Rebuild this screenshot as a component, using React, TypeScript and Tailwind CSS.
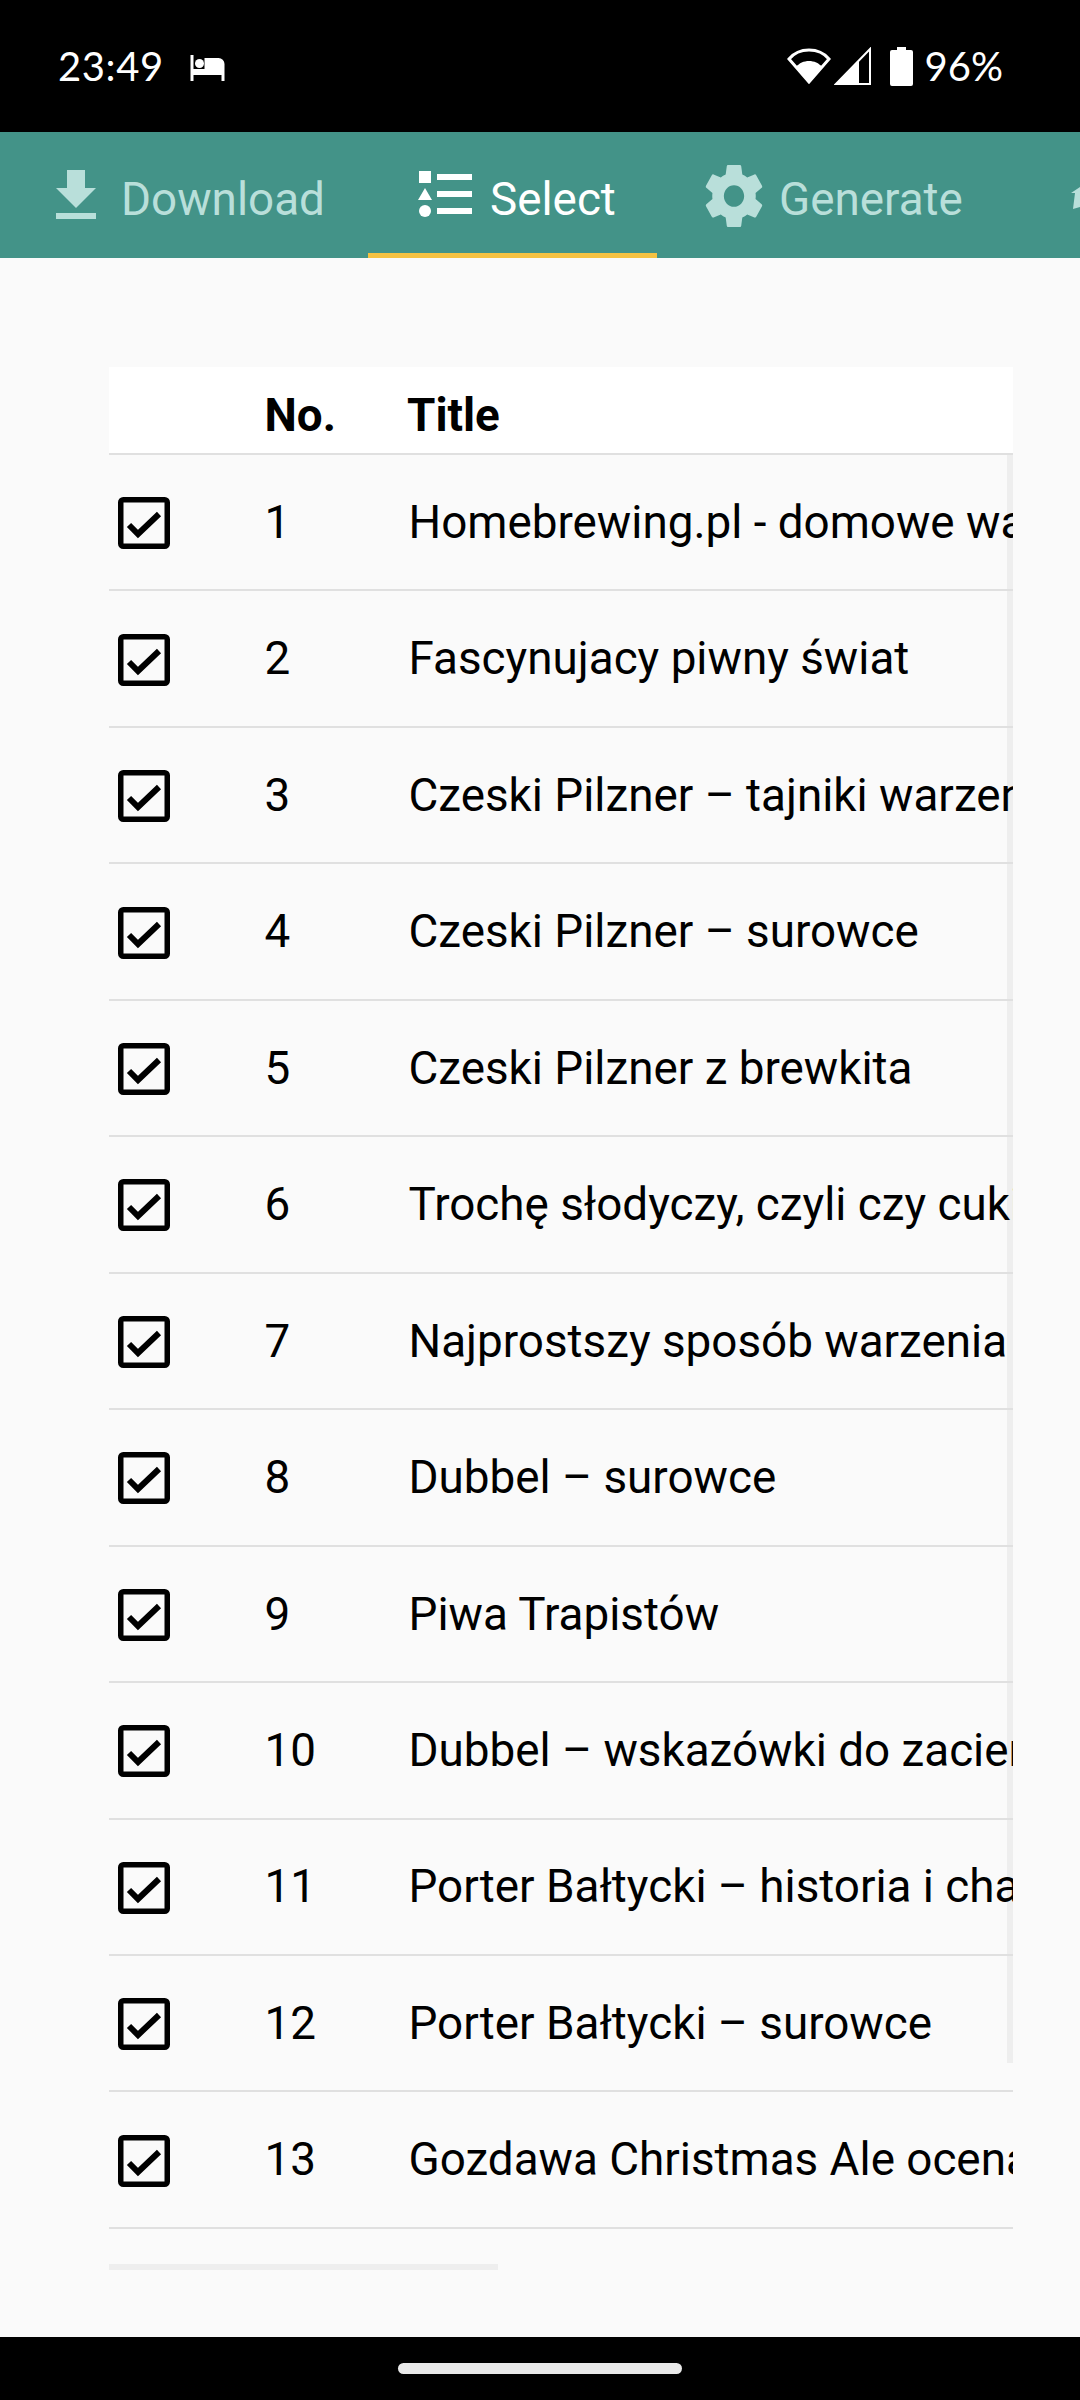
const titles = [
  "Homebrewing.pl - domowe warzenie piwa",
  "Fascynujacy piwny świat",
  "Czeski Pilzner – tajniki warzenia",
  "Czeski Pilzner – surowce",
  "Czeski Pilzner z brewkita",
  "Trochę słodyczy, czyli czy cukier",
  "Najprostszy sposób warzenia piwa",
  "Dubbel – surowce",
  "Piwa Trapistów",
  "Dubbel – wskazówki do zacierania",
  "Porter Bałtycki – historia i charakter",
  "Porter Bałtycki – surowce",
  "Gozdawa Christmas Ale ocena",
];

const CheckBox = () => (
  <svg width="52" height="52" viewBox="0 0 52 52" fill="none" stroke="#000" strokeWidth="5.5">
    <rect x="2.75" y="2.75" width="46.5" height="46.5" rx="2.5" />
    <path d="M11 28 L20 37 L41 17" strokeWidth="6" />
  </svg>
);

const Row = ({ no, title }: { no: number; title: string }) => (
  <div className="relative flex h-[136.46px] items-center border-b-2 border-[#e0e0e0]">
    <div className="w-[155.5px] pl-[9px] pt-[2px]">
      <CheckBox />
    </div>
    <div className="w-[144px] pt-[2px]">{no}</div>
    <div className="flex-1 overflow-hidden whitespace-nowrap pt-[2px]">{title}</div>
  </div>
);

const Tab = ({
  icon,
  label,
  active,
  className,
}: {
  icon: React.ReactNode;
  label: string;
  active?: boolean;
  className: string;
}) => (
  <div
    className={`flex h-full shrink-0 items-center ${className} ${
      active ? "border-b-[5px] border-[#f5c242] pt-[5px] text-white" : "text-[#b9dfda]"
    }`}
  >
    {icon}
    {label && <span className="pt-[10px] text-[45.8px] leading-none">{label}</span>}
  </div>
);

export default function App() {
  return (
    <div className="flex h-[2400px] w-[1080px] flex-col overflow-hidden bg-[#fafafa] font-['Roboto',sans-serif] text-black">
      {/* status bar */}
      <div className="flex h-[132px] items-center justify-between bg-black pl-[58px] pr-[77px] font-['Lato',sans-serif] text-[40px] text-white">
        <div className="flex items-center">
          <span className="tracking-[0.6px]">23:49</span>
          <svg width="38" height="26" viewBox="0 0 37 26" fill="#fff" className="ml-[26px] mt-[4px]">
            <path d="M0 0h3v17h31V9a6 6 0 0 0-6-6H14v11H3v3h31v9h-3v-6H3v6H0z" />
            <circle cx="9" cy="8.5" r="4.5" />
          </svg>
        </div>
        <div className="flex items-center">
          <svg width="44" height="38" viewBox="0 0 44 38" fill="none" className="mr-[3px]">
            <path d="M22 35 2 12C7 6 14 3 22 3s15 3 20 9z" stroke="#fff" strokeWidth="3" />
            <path d="M22 36 9 20c3-4 8-6 13-6s10 2 13 6z" fill="#fff" />
          </svg>
          <svg width="37" height="38" viewBox="0 0 37 38" fill="none" className="mr-[19px]">
            <path d="M36 2v35H2z" stroke="#fff" strokeWidth="2" />
            <path d="M25 13v24H2z" fill="#fff" />
          </svg>
          <svg width="23" height="39" viewBox="0 0 23 39" fill="#fff" className="mr-[12px]">
            <path d="M7 0h9v3h5a2 2 0 0 1 2 2v32a2 2 0 0 1-2 2H2a2 2 0 0 1-2-2V5a2 2 0 0 1 2-2h5z" />
          </svg>
          <span>96%</span>
        </div>
      </div>

      {/* tabs */}
      <div className="flex h-[126px] overflow-hidden bg-[#439388]">
        <Tab
          className="w-[368px] pl-[56px]"
          label="Download"
          icon={
            <svg width="40" height="49" viewBox="0 0 40 49" fill="currentColor" className="mr-[25px] mb-[2px]">
              <path d="M11 0h18v18h11L20 38 0 18h11zM0 43h40v6H0z" />
            </svg>
          }
        />
        <Tab
          active
          className="w-[289px] pl-[50px]"
          label="Select"
          icon={
            <svg width="54" height="46" viewBox="0 0 54 46" fill="currentColor" className="mr-[18px] mb-[2px]">
              <path d="M1 0h12v12H1zM19 3h35v6H19zM19 20h35v6H19zM19 37h35v6H19zM7 17l7 12H0z" />
              <circle cx="7" cy="40" r="6" />
            </svg>
          }
        />
        <Tab
          className="w-[348px] pl-[48px]"
          label="Generate"
          icon={
            <svg width="58" height="62" viewBox="2 2 20 20" fill="currentColor" className="mr-[16px] mt-[2px]" preserveAspectRatio="none">
              <path d="M19.43 12.98c.04-.32.07-.64.07-.98s-.03-.66-.07-.98l2.11-1.65c.19-.15.24-.42.12-.64l-2-3.46c-.12-.22-.39-.3-.61-.22l-2.49 1c-.52-.4-1.08-.73-1.69-.98l-.38-2.65A.488.488 0 0 0 14 2h-4c-.25 0-.46.18-.49.42l-.38 2.65c-.61.25-1.17.59-1.69.98l-2.49-1c-.23-.09-.49 0-.61.22l-2 3.46c-.13.22-.07.49.12.64l2.11 1.65c-.04.32-.07.65-.07.98s.03.66.07.98l-2.11 1.65c-.19.15-.24.42-.12.64l2 3.46c.12.22.39.3.61.22l2.49-1c.52.4 1.08.73 1.69.98l.38 2.65c.03.24.24.42.49.42h4c.25 0 .46-.18.49-.42l.38-2.65c.61-.25 1.17-.59 1.69-.98l2.49 1c.23.09.49 0 .61-.22l2-3.46c.12-.22.07-.49-.12-.64l-2.11-1.65zM12 15.5c-1.93 0-3.5-1.57-3.5-3.5s1.57-3.5 3.5-3.5 3.5 1.57 3.5 3.5-1.57 3.5-3.5 3.5z" />
            </svg>
          }
        />
        <Tab
          className="pl-[66px]"
          label=""
          icon={
            <svg width="9" height="22" viewBox="0 0 9 22" fill="currentColor" className="mt-[6px]">
              <path d="M0 6 9 0v20l-7 2 2-16z" />
            </svg>
          }
        />
      </div>

      {/* table */}
      <div className="relative ml-[109px] mt-[109px] w-[904px] flex-1 text-[45.8px]">
        {/* scrollbar sits behind the rows */}
        <div className="absolute right-0 top-[88px] h-[1608px] w-[6px] bg-[#eeeeee]" />
        <div className="flex h-[88px] items-center border-b-2 border-[#e0e0e0] bg-white pt-[13px] font-bold">
          <div className="w-[155.5px]" />
          <div className="w-[142.5px]">No.</div>
          <div>Title</div>
        </div>
        {titles.map((t, i) => (
          <Row key={i} no={i + 1} title={t} />
        ))}
        <div className="mt-[35px] h-[6px] w-[389px] bg-[#eeeeee]" />
      </div>

      {/* nav bar */}
      <div className="flex h-[63px] items-center justify-center bg-black">
        <div className="h-[11px] w-[284px] rounded-full bg-[#e9e9e9]" />
      </div>
    </div>
  );
}
